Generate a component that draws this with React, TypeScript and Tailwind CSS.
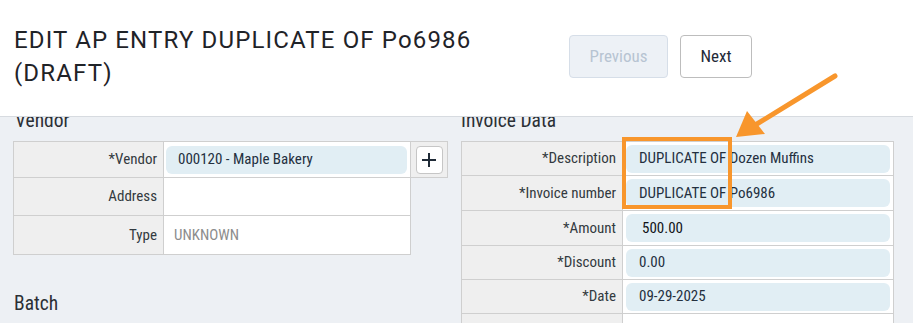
import React from "react";

function LabelCell({ children, w }: { children?: React.ReactNode; w: string }) {
  return (
    <div className={`${w} shrink-0 border border-[#cfcfcf] bg-[#efefef] flex items-center justify-end pr-[6px] text-[15px] text-[#333a40]`}>
      {children}
    </div>
  );
}

export default function App() {
  return (
    <div className="relative w-[913px] h-[323px] overflow-hidden bg-[#edf0f4] font-['Roboto',sans-serif] [font-stretch:87.5%] text-[#2b3038]">
      <header className="relative z-10 flex h-[117px] items-start border-b border-[#d7dbe0] bg-white">
        <h1 className="ml-[14px] mt-[24px] w-[520px] text-[24px] font-normal leading-[33px] tracking-[1.15px] text-[#1f2328] [font-stretch:100%]">
          EDIT AP ENTRY DUPLICATE OF Po6986 (DRAFT)
        </h1>
        <div className="ml-[35px] mt-[35px] flex gap-[12px]">
          <button className="h-[43px] w-[99px] rounded-[4px] border border-[#d6dee8] bg-[#edf1f6] text-[17px] text-[#b7c4d2]">
            Previous
          </button>
          <button className="h-[43px] w-[72px] rounded-[4px] border border-[#bdbdbd] bg-white text-[17px] text-[#1e2a38]">
            Next
          </button>
        </div>
      </header>

      <main className="-mt-[8px] flex pl-[13px]">
        {/* Left column */}
        <div className="flex w-[434px] flex-col">
          <h2 className="ml-[2px] text-[19.5px] leading-[24px] text-[#2b2f35]">Vendor</h2>
          <div className="mt-[8px] flex flex-col">
            <div className="flex h-[37px]">
              <LabelCell w="w-[151px]">*Vendor</LabelCell>
              <div className="-ml-px flex w-[248px] shrink-0 items-center border border-[#cfcfcf] bg-white pl-[2px] pr-[3px]">
                <div className="flex h-[28px] w-full items-center rounded-[6px] bg-[#e1eef4] pl-[12px] text-[15px] text-[#24303f]">
                  000120 - Maple Bakery
                </div>
              </div>
              <div className="-ml-px flex w-[38px] shrink-0 items-center justify-center border border-[#cfcfcf] bg-[#efefef]">
                <div className="flex h-[28px] w-[27px] items-center justify-center rounded-[4px] border border-[#c6c6c6] bg-white">
                  <svg width="16" height="16" viewBox="0 0 16 16">
                    <path d="M8 1v14M1 8h14" stroke="#1f2a36" strokeWidth="2" />
                  </svg>
                </div>
              </div>
            </div>
            <div className="-mt-px flex h-[39px]">
              <LabelCell w="w-[151px]">Address</LabelCell>
              <div className="-ml-px w-[248px] shrink-0 border border-[#cfcfcf] bg-white" />
            </div>
            <div className="-mt-px flex h-[40px]">
              <LabelCell w="w-[151px]">Type</LabelCell>
              <div className="-ml-px flex w-[248px] shrink-0 items-center border border-[#cfcfcf] bg-white pl-[10px] text-[15px] text-[#8c8c8c]">
                UNKNOWN
              </div>
            </div>
          </div>
          <h2 className="ml-[1px] mt-[37px] text-[19.5px] leading-[24px] text-[#2b2f35]">Batch</h2>
          <div className="mt-[7px] h-[20px] border-t border-[#cfcfcf]" />
        </div>

        {/* Right column */}
        <div className="ml-[14px] flex w-[433px] flex-col">
          <h2 className="text-[19.5px] leading-[24px] text-[#2b2f35]">Invoice Data</h2>
          <div className="mt-[8px] flex flex-col">
            {[
              { label: "*Description", value: "DUPLICATE OF Dozen Muffins", h: "h-[35px]", pl: "pl-[13px]" },
              { label: "*Invoice number", value: "DUPLICATE OF Po6986", h: "h-[36px]", pl: "pl-[13px]" },
              { label: "*Amount", value: "500.00", h: "h-[36px]", pl: "pl-[16px]" },
              { label: "*Discount", value: "0.00", h: "h-[35px]", pl: "pl-[13px]" },
              { label: "*Date", value: "09-29-2025", h: "h-[35px]", pl: "pl-[13px]" },
            ].map((r, i) => (
              <div key={r.label} className={`flex ${r.h} ${i > 0 ? "-mt-px" : ""}`}>
                <LabelCell w="w-[162px]">{r.label}</LabelCell>
                <div className="-ml-px flex w-[272px] shrink-0 items-center border border-[#cfcfcf] bg-white px-[3px]">
                  <div
                    className={`flex h-[28px] w-full items-center rounded-[6px] bg-[#e1eef4] ${r.pl} text-[15px] ${
                      r.label === "*Amount" ? "text-[#111418]" : "text-[#24303f]"
                    }`}
                  >
                    {r.value}
                  </div>
                </div>
              </div>
            ))}
            <div className="-mt-px flex h-[35px]">
              <LabelCell w="w-[162px]" />
              <div className="-ml-px w-[272px] shrink-0 border border-[#cfcfcf] bg-white" />
            </div>
          </div>
        </div>
      </main>

      {/* Annotation overlay */}
      <div className="pointer-events-none absolute left-[622px] top-[137px] z-20 h-[72px] w-[110px] border-[4px] border-[#f8962c]" />
      <svg className="pointer-events-none absolute left-0 top-0 z-20" width="913" height="323" viewBox="0 0 913 323">
        <line x1="835" y1="76" x2="752" y2="127" stroke="#f8962c" strokeWidth="5" strokeLinecap="round" />
        <polygon points="736,137 747,111 765,134" fill="#f8962c" />
      </svg>
    </div>
  );
}
